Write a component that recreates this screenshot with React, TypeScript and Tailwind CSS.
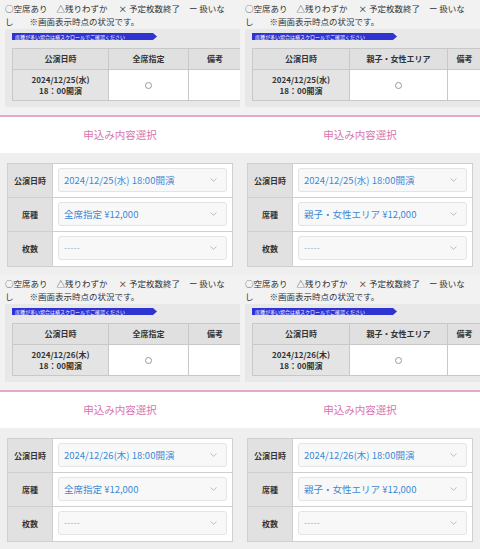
import React from "react";

type CellProps = {
  day: string;
  seat: string;
  cols: [number, number, number];
};

function Chevron() {
  return (
    <svg width="7" height="4" viewBox="0 0 7 4" className="shrink-0">
      <path d="M0.5 0.5 L3.5 3.3 L6.5 0.5" fill="none" stroke="#a3b1c0" strokeWidth="0.8" />
    </svg>
  );
}

function Legend() {
  return (
    <div className="pl-[5px] pt-[1px] text-[8.5px] leading-[13px] text-[#333]">
      <div className="flex whitespace-nowrap">
        <span>○空席あり</span>
        <span className="ml-[9px]">△残りわずか</span>
        <span className="ml-[11px]">× 予定枚数終了</span>
        <span className="ml-[9px]">ー 扱いな</span>
      </div>
      <div className="whitespace-nowrap">
        し<span className="ml-[16px]">※画面表示時点の状況です。</span>
      </div>
    </div>
  );
}

function StatusTable({ day, seat, cols }: CellProps) {
  const total = cols[0] + cols[1] + cols[2];
  return (
    <div className="ml-[5px] mt-[1px] h-[78px] bg-[#e8e8e8] pl-[7px] pt-[4px]">
      <div className="h-[7px] w-[145px] bg-[#2f33d2] pl-[3px] text-[5px] leading-[7px] whitespace-nowrap text-white [clip-path:polygon(0_0,calc(100%-4px)_0,100%_50%,calc(100%-4px)_100%,0_100%)]">
        席種が多い場合は横スクロールでご確認ください
      </div>
      <table
        style={{ width: total }}
        className="mt-[8px] max-w-none table-fixed border-collapse text-[8px] font-bold text-[#333]"
      >
        <colgroup>
          <col style={{ width: cols[0] }} />
          <col style={{ width: cols[1] }} />
          <col style={{ width: cols[2] }} />
        </colgroup>
        <thead>
          <tr className="h-[21px]">
            <th className="border border-[#c8c8c8] bg-[#e0e0e0] font-bold">公演日時</th>
            <th className="border border-[#c8c8c8] bg-[#e0e0e0] font-bold whitespace-nowrap">{seat}</th>
            <th className="border border-[#c8c8c8] bg-[#e0e0e0] font-bold">備考</th>
          </tr>
        </thead>
        <tbody>
          <tr className="h-[31px]">
            <td className="border border-[#c8c8c8] bg-[#e4e4e4] text-center leading-[11px]">
              {day}
              <br />
              18：00開演
            </td>
            <td className="border border-[#c8c8c8] bg-white text-center">
              <span className="inline-block h-[7px] w-[7px] rounded-full border border-[#999] align-middle" />
            </td>
            <td className="border border-[#c8c8c8] bg-white" />
          </tr>
        </tbody>
      </table>
    </div>
  );
}

function FormRow({ label, value, muted }: { label: string; value: string; muted?: boolean }) {
  return (
    <div className="grid h-[34px] grid-cols-[45px_1fr] border-b border-[#cfcfcf] last:border-b-0">
      <div className="flex items-center justify-center border-r border-[#cfcfcf] bg-[#e1e1e1] text-[8px] font-bold text-[#333]">
        {label}
      </div>
      <div className="bg-white p-[4px_5px]">
        <div className="flex h-[24px] items-center justify-between rounded-[3px] border border-[#e2e4e6] bg-[#f8f8f9] pl-[5px] pr-[9px]">
          <span
            className={
              muted
                ? "text-[8px] tracking-[0.5px] text-[#7fa7cf]"
                : "text-[9.5px] whitespace-nowrap text-[#3a8ad6]"
            }
          >
            {value}
          </span>
          <Chevron />
        </div>
      </div>
    </div>
  );
}

function Cell({ day, seat, cols }: CellProps) {
  return (
    <div className="h-[275px] w-[240px] overflow-hidden bg-[#efefef]">
      <div className="h-[115px] bg-[#f2f2f2] pt-[1px]">
        <Legend />
        <StatusTable day={day} seat={seat} cols={cols} />
      </div>
      <div className="h-[2px] bg-[#e4a9c9]" />
      <div className="flex h-[36px] items-center justify-center bg-white text-[10.5px] text-[#d775ad]">
        申込み内容選択
      </div>
      <div className="h-[122px] px-[7px] pt-[10px]">
        <div className="border border-[#cfcfcf]">
          <FormRow label="公演日時" value={`${day} 18:00開演`} />
          <FormRow label="席種" value={`${seat} ¥12,000`} />
          <FormRow label="枚数" value="-----" muted />
        </div>
      </div>
    </div>
  );
}

export default function App() {
  return (
    <div className="h-[549px] w-[480px] overflow-hidden bg-[#efefef] font-['Noto_Sans_CJK_JP','Noto_Sans',sans-serif]">
      <div className="grid grid-cols-[240px_240px]">
        <Cell day="2024/12/25(水)" seat="全席指定" cols={[96, 80, 53]} />
        <Cell day="2024/12/25(水)" seat="親子・女性エリア" cols={[97, 98, 34]} />
        <Cell day="2024/12/26(木)" seat="全席指定" cols={[96, 80, 53]} />
        <Cell day="2024/12/26(木)" seat="親子・女性エリア" cols={[97, 98, 34]} />
      </div>
    </div>
  );
}
